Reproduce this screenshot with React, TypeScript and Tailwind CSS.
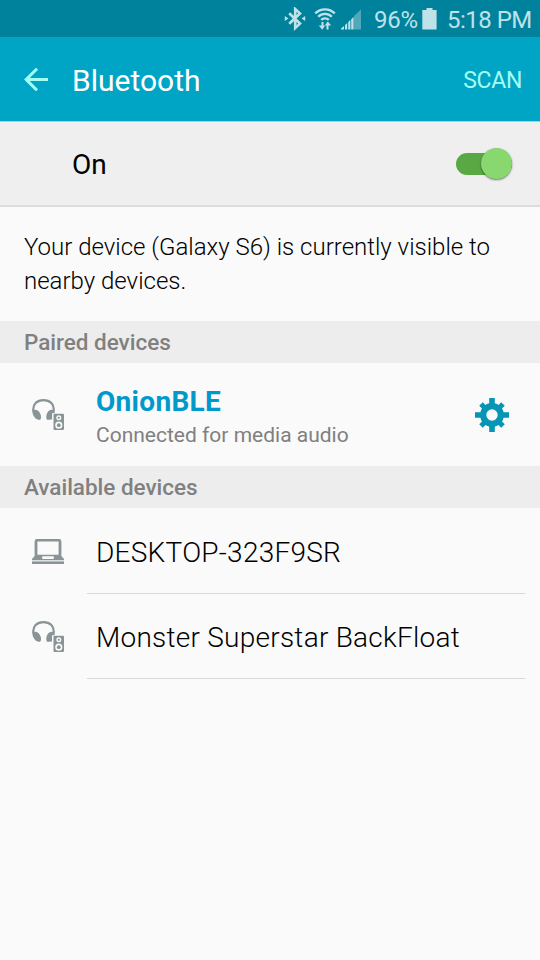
import React from 'react';

const BluetoothIcon: React.FC = () => (
  <svg className="h-6 w-[22px]" viewBox="0 0 22 24" fill="none" stroke="#bfe2e8" strokeWidth="2.6">
    <path d="M5.2 6.3 16 16.6 11.2 21V2L16 6.4 5.2 16.7" />
    <path d="M0.8 9 4.4 11.5 0.8 14zM21.2 9 17.6 11.5 21.2 14z" fill="#bfe2e8" stroke="none" />
  </svg>
);

const WifiIcon: React.FC = () => (
  <svg className="h-6 w-[22px]" viewBox="0 0 22 24" fill="none" stroke="#bfe2e8" strokeWidth="2.3">
    <path d="M1.2 6.4C6.6 0.9 15.4 0.9 20.8 6.4" />
    <path d="M4.2 9.8C8 6 14 6 17.8 9.8" />
    <path d="M7.2 12.9C9.3 10.8 12.7 10.8 14.8 12.9" />
    <path d="M8.5 15V20M13.5 22.5V17.5" strokeWidth="2" />
    <path d="M4.8 18.6H11.2L8.2 22.8zM10.8 18.4H17.2L13.8 14.4z" fill="#bfe2e8" stroke="none" />
  </svg>
);

const SignalIcon: React.FC = () => (
  <svg className="h-6 w-5" viewBox="0 0 20 24">
    <path d="M13 9 20 2.5V22.5H13z" fill="#4fa9bb" />
    <path d="M0 22.5V21.6L3 19V22.5zM4 22.5V18L6.2 16V22.5zM7.2 22.5V15L9.4 13V22.5zM10.2 22.5V12.2L12.6 9.9V22.5z" fill="#bfe2e8" />
  </svg>
);

const BatteryIcon: React.FC = () => (
  <svg className="h-6 w-[15px]" viewBox="0 0 15 24" fill="#bfe2e8">
    <path d="M4.5 1H10.5V3H14.6V22.5H0.3V3H4.5z" />
  </svg>
);

const BackIcon: React.FC = () => (
  <svg className="h-6 w-6" viewBox="0 0 24 24" fill="none" stroke="#a5fff4" strokeWidth="3">
    <path d="M24 12.5H2.5M13 1.7 2.2 12.5 13 23.3" />
  </svg>
);

const HeadphonesIcon: React.FC = () => (
  <svg className="h-8 w-8" viewBox="0 0 32 32" fill="#899496">
    <path d="M1.4 12C0.4 5.4 5 1.1 11.5 1.1S22.6 5.4 21.6 12" fill="none" stroke="#899496" strokeWidth="2.2" />
    <path d="M2.8 10.7C5.6 10.2 7.8 12.6 8.7 15.8 9.6 19.3 8.8 21.4 6.4 20.8 3 20 0.3 16 0.3 11.5z" />
    <path d="M20.2 10.7C17.4 10.2 15.2 12.6 14.5 15.8 13.8 19.6 14.6 21.3 16.6 20.8L20 20.5V14.2H22.5L22.7 11.5z" />
    <path
      fillRule="evenodd"
      d="M22.6 14.8H30.9Q32 14.8 32 15.9V30Q32 31.1 30.9 31.1H22.6Q21.5 31.1 21.5 30V15.9Q21.5 14.8 22.6 14.8zM26.8 16.3A2.5 2.5 0 1 0 26.8 21.3 2.5 2.5 0 1 0 26.8 16.3zM26.8 22.6A3.6 3.6 0 1 0 26.8 29.8 3.6 3.6 0 1 0 26.8 22.6z"
    />
    <circle cx="26.8" cy="18.8" r="1.1" />
    <circle cx="26.8" cy="26.2" r="1.9" />
  </svg>
);

const LaptopIcon: React.FC = () => (
  <svg className="h-[26px] w-8" viewBox="0 0 32 26" fill="#899496">
    <path
      fillRule="evenodd"
      d="M5 0H27Q29.4 0 29.4 2.4V17L32 20V21.2H0V20L2.6 17V2.4Q2.6 0 5 0zM5.4 2.5V15.8H26.6V2.5zM10.2 17.3V20H21.8V17.3z"
    />
    <path d="M0 22.4H32V25H0z" />
  </svg>
);

const GearIcon: React.FC = () => (
  <svg className="h-[34px] w-[34px]" viewBox="-17 -17 34 34" stroke="#0595b5" fill="none">
    <circle r="8.8" strokeWidth="6.2" />
    <path d="M0 -17V-9M0 17V9M-17 0H-9M17 0H9" strokeWidth="5.6" />
    <path d="M-11 -11-7 -7M11 -11 7 -7M-11 11-7 7M11 11 7 7" strokeWidth="5" />
  </svg>
);

const SectionHeader: React.FC<{ title: string }> = ({ title }) => (
  <div className="flex h-[42px] items-center bg-[#ededed] pt-px pl-6 text-[22.5px] font-medium tracking-[-0.02px] text-[#808080]">
    {title}
  </div>
);

interface DeviceRowProps {
  name: string;
  icon: React.ReactNode;
}

const DeviceRow: React.FC<DeviceRowProps> = ({ name, icon }) => (
  <div className="relative flex h-[85px] items-center pt-0.5 pl-8 text-black">
    <div className="w-16">{icon}</div>
    <span className="pt-[3px] text-[28px] font-light tracking-[0.25px]">{name}</span>
    <div className="absolute right-[15px] -bottom-px left-[87px] h-px bg-[#d8d8d8]" />
  </div>
);

const App: React.FC = () => {
  return (
    <div className="h-[960px] w-[540px] overflow-hidden bg-[#fafafa] font-['Roboto',sans-serif] whitespace-nowrap">
      {/* Status bar */}
      <div className="flex h-[37px] items-center bg-[#00829d] pl-[284px] text-2xl text-[#bfe2e8]">
        <BluetoothIcon />
        <div className="ml-2"><WifiIcon /></div>
        <div className="ml-[5px]"><SignalIcon /></div>
        <span className="ml-[13px] w-12 pt-[3px] tracking-[-0.3px]">96%</span>
        <BatteryIcon />
        <span className="ml-[10px] pt-[3px] tracking-[-0.5px]">5:18 PM</span>
      </div>

      {/* Action bar */}
      <div className="flex h-[84px] items-center bg-[#00a5c6] pl-6">
        <BackIcon />
        <h1 className="ml-6 pt-0.5 text-[30px] text-white">Bluetooth</h1>
        <button className="mt-1 mr-[18px] ml-auto text-[23px] tracking-[-0.3px] text-[#a5fff4]">SCAN</button>
      </div>

      <div className="flex h-[86px] items-center border-t border-b-2 border-t-[#b4cbd0] border-b-[#dcdcdc] bg-[#efefef] pl-[72px]">
        <span className="pt-[3px] text-[28px] text-black">On</span>
        <div className="relative mr-7 ml-auto h-[22px] w-14 rounded-full bg-[#5aa843]">
          <div className="absolute -top-[5px] right-[0.5px] h-[31px] w-[31px] rounded-full bg-[#88d76f] shadow-[0_1px_2px_rgba(0,0,0,0.5)]" />
        </div>
      </div>

      <p className="h-[114px] pt-[23px] pl-6 text-[24px] leading-[34px] font-light text-black">
        Your device (Galaxy S6) is currently visible to
        <br />
        nearby devices.
      </p>

      <SectionHeader title="Paired devices" />
      <div className="flex h-[103px] items-center pr-[31px] pl-8">
        <div className="w-16"><HeadphonesIcon /></div>
        <div className="pt-[3px]">
          <div className="pt-px text-[28px] leading-9 font-bold tracking-[0.3px] text-[#0099cc]">OnionBLE</div>
          <div className="text-[21px] leading-[30px] text-[#808080]">Connected for media audio</div>
        </div>
        <button className="ml-auto"><GearIcon /></button>
      </div>

      <SectionHeader title="Available devices" />
      <DeviceRow name="DESKTOP-323F9SR" icon={<LaptopIcon />} />
      <DeviceRow name="Monster Superstar BackFloat" icon={<HeadphonesIcon />} />
    </div>
  );
};

export default App;
